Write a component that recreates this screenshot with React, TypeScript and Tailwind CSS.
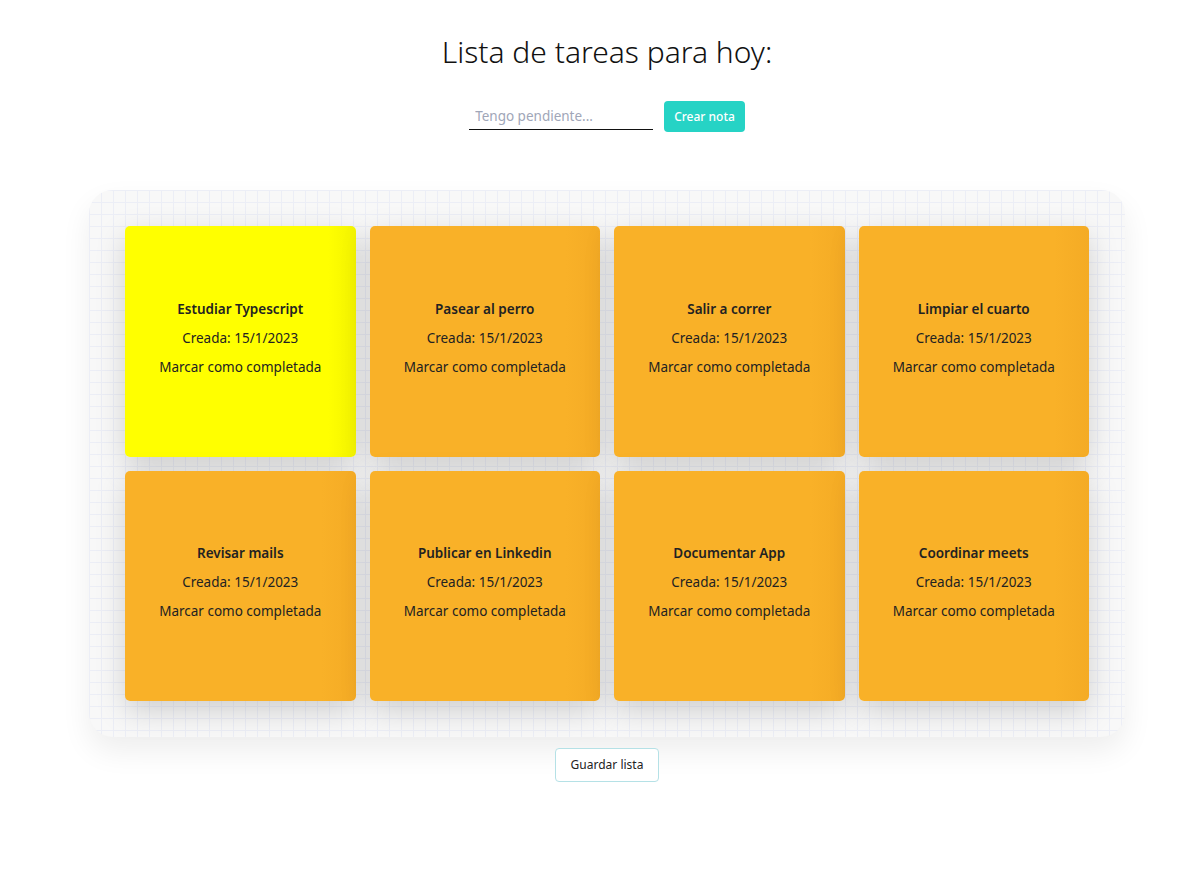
import React from 'react';

interface Task {
  title: string;
  created: string;
  done: boolean;
}

const tasks: Task[] = [
  { title: 'Estudiar Typescript', created: '15/1/2023', done: true },
  { title: 'Pasear al perro', created: '15/1/2023', done: false },
  { title: 'Salir a correr', created: '15/1/2023', done: false },
  { title: 'Limpiar el cuarto', created: '15/1/2023', done: false },
  { title: 'Revisar mails', created: '15/1/2023', done: false },
  { title: 'Publicar en Linkedin', created: '15/1/2023', done: false },
  { title: 'Documentar App', created: '15/1/2023', done: false },
  { title: 'Coordinar meets', created: '15/1/2023', done: false },
];

function Note({ task }: { task: Task }) {
  return (
    <div
      className={
        task.done
          ? 'aspect-square rounded-[5px] pb-[6px] flex flex-col items-center justify-center gap-[10px] text-[13.5px] text-[#222] bg-[linear-gradient(to_right,#ffff00_88%,#f3f300)] shadow-[0_10px_30px_rgba(0,0,0,0.17)]'
          : 'aspect-square rounded-[5px] pb-[6px] flex flex-col items-center justify-center gap-[10px] text-[13.5px] text-[#222] bg-[linear-gradient(to_right,#f9b128_85%,#f4ab25)] shadow-[0_10px_30px_rgba(0,0,0,0.17)]'
      }
    >
      <p className="font-semibold leading-[19px]">{task.title}</p>
      <p className="leading-[19px]">Creada: {task.created}</p>
      <p className="leading-[19px]">Marcar como completada</p>
    </div>
  );
}

export default function App() {
  return (
    <div
      className="min-h-screen bg-white pl-[22px] flex flex-col items-center"
      style={{ fontFamily: '"Noto Sans", "Open Sans", sans-serif' }}
    >
      <h1 className="mt-[31px] text-[30px] font-light leading-[42px] text-[#111]">
        Lista de tareas para hoy:
      </h1>

      <div className="mt-[28px] flex items-center gap-[11px]">
        <input
          className="w-[184px] border-b border-[#111] text-[13.5px] px-[6px] py-[3px] outline-none placeholder:text-[#a0a6b8] bg-transparent"
          placeholder="Tengo pendiente..."
        />
        <button className="h-[31px] px-[10px] rounded-[4px] bg-[#26d3c5] text-white text-[12px] font-medium">
          Crear nota
        </button>
      </div>

      <div className="mt-[58px] w-[1036px] rounded-[24px] p-[36px] bg-[#f8f8f8] bg-[linear-gradient(#eceef6_1px,transparent_1px),linear-gradient(90deg,#eceef6_1px,transparent_1px)] bg-[size:12px_12px] shadow-[0_14px_30px_rgba(0,0,0,0.07)]">
        <div className="grid grid-cols-4 gap-[14px]">
          {tasks.map((t) => (
            <Note key={t.title} task={t} />
          ))}
        </div>
      </div>

      <button className="mt-[11px] h-[34px] px-[15px] rounded-[4px] border border-[#b5e1e6] bg-white text-[12px] text-[#222]">
        Guardar lista
      </button>
    </div>
  );
}
